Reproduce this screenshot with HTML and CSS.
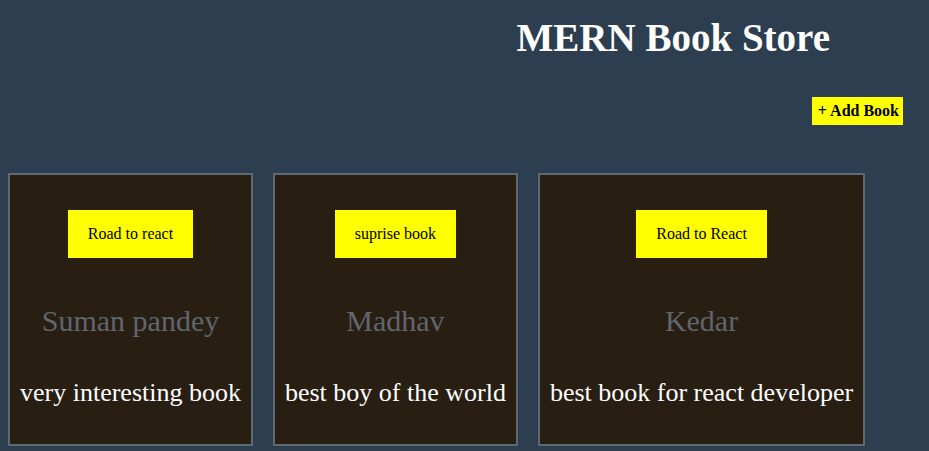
FILE: index.html
```html
<!DOCTYPE html>
<html>
<head>
<meta charset="utf-8">
<title>MERN Book Store</title>
<link rel="stylesheet" href="styles.css">
</head>
<body>
<div class="page">
  <header class="header">
    <h1 class="title">MERN Book Store</h1>
  </header>
  <div class="actions">
    <button class="add-btn">+ Add Book</button>
  </div>
  <main class="cards">
    <div class="card">
      <div class="book-title">Road to react</div>
      <div class="author">Suman pandey</div>
      <div class="desc">very interesting book</div>
    </div>
    <div class="card">
      <div class="book-title">suprise book</div>
      <div class="author">Madhav</div>
      <div class="desc">best boy of the world</div>
    </div>
    <div class="card">
      <div class="book-title">Road to React</div>
      <div class="author">Kedar</div>
      <div class="desc">best book for react developer</div>
    </div>
  </main>
</div>
</body>
</html>
```
FILE: styles.css
```css
html, body {
  margin: 0;
  padding: 0;
  background: #2c3e50;
  height: 100%;
  overflow: hidden;
}
body {
  font-family: "Liberation Serif", "Times New Roman", serif;
  padding: 8px;
  box-sizing: border-box;
}
.header {
  display: flex;
  justify-content: flex-end;
  padding-top: 8px;
  padding-right: 91px;
}
.title {
  margin: 0;
  color: #ffffff;
  font-size: 39px;
  line-height: 44px;
  font-weight: bold;
}
.actions {
  display: flex;
  justify-content: flex-end;
  padding-top: 37px;
  padding-right: 18px;
}
.add-btn {
  font-family: "Liberation Serif", "Times New Roman", serif;
  font-weight: bold;
  font-size: 16px;
  line-height: 18px;
  color: #000;
  background: #ffff00;
  border: none;
  padding: 5px 4px 5px 6px;
  margin: 0;
  cursor: pointer;
}
.cards {
  display: flex;
  gap: 20px;
  margin-top: 48px;
  align-items: stretch;
}
.card {
  background: #281e12;
  border: 2px solid #5f6974;
  display: flex;
  flex-direction: column;
  align-items: center;
  padding: 35px 10px 38px;
  height: 273px;
  box-sizing: border-box;
}
.book-title {
  background: #ffff00;
  color: #000;
  font-size: 16px;
  line-height: 18px;
  padding: 15px 20px;
}
.author {
  color: #5f6670;
  font-size: 30px;
  line-height: 34px;
  margin-top: 46px;
  white-space: nowrap;
}
.desc {
  color: #ffffff;
  font-size: 26px;
  line-height: 30px;
  margin-top: 40px;
  white-space: nowrap;
}
```
